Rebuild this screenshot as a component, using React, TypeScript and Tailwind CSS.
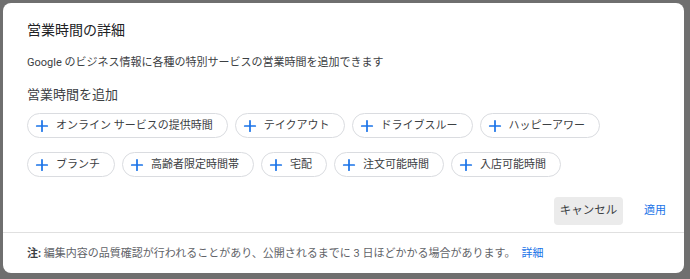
import { Plus } from 'lucide-react';

const row1 = ['オンライン サービスの提供時間', 'テイクアウト', 'ドライブスルー', 'ハッピーアワー'];
const row2 = ['ブランチ', '高齢者限定時間帯', '宅配', '注文可能時間', '入店可能時間'];

function Chip({ label }: { label: string }) {
    return (
        <button className="h-[25px] flex items-center gap-[5px] pl-[5px] pr-[14px] rounded-full border border-[#dadce0] bg-white text-[11px] text-[#3c4043] leading-none whitespace-nowrap">
            <Plus className="w-[18px] h-[18px] text-[#1a73e8]" strokeWidth={2.3} />
            <span>{label}</span>
        </button>
    );
}

export default function App() {
    return (
        <div
            className="w-[690px] h-[279px] bg-[#6f6f6f] pt-[3px] pl-[3px] overflow-hidden"
            style={{ fontFamily: 'Roboto, "Noto Sans CJK JP", sans-serif' }}
        >
            <div className="w-[681px] h-[270px] bg-white rounded-[8px] flex flex-col">
                <div className="pl-[24px] pt-[17px]">
                    <h2 className="h-[20px] leading-[20px] text-[14px] text-[#202124]">営業時間の詳細</h2>
                    <p className="mt-[15px] h-[16px] leading-[16px] text-[11px] text-[#3c4043]">
                        Google のビジネス情報に各種の特別サービスの営業時間を追加できます
                    </p>
                    <h3 className="mt-[14px] h-[20px] leading-[20px] text-[13px] text-[#3c4043]">営業時間を追加</h3>

                    <div className="mt-[8px] flex gap-x-[7px]">
                        {row1.map(l => <Chip key={l} label={l} />)}
                    </div>
                    <div className="mt-[14px] flex gap-x-[7px]">
                        {row2.map(l => <Chip key={l} label={l} />)}
                    </div>
                </div>

                {/* Actions */}
                <div className="mt-[20px] flex justify-end items-center gap-[15px] pr-[12px]">
                    <button className="h-[28px] w-[69px] rounded-[4px] bg-[#ebebeb] text-[11.5px] text-[#3c4043]">キャンセル</button>
                    <button className="h-[28px] px-[6px] text-[11px] text-[#1a73e8]">適用</button>
                </div>

                <div className="mt-[7px] border-t border-[#e0e0e0]" />

                <p className="pt-[13px] pl-[24px] h-[29px] leading-[16px] text-[11px] text-[#5f6368]">
                    <span className="font-bold text-[#3c4043]">注: </span>
                    編集内容の品質確認が行われることがあり、公開されるまでに 3 日ほどかかる場合があります。
                    <span className="ml-[6px] text-[#1a73e8]">詳細</span>
                </p>
            </div>
        </div>
    );
}
